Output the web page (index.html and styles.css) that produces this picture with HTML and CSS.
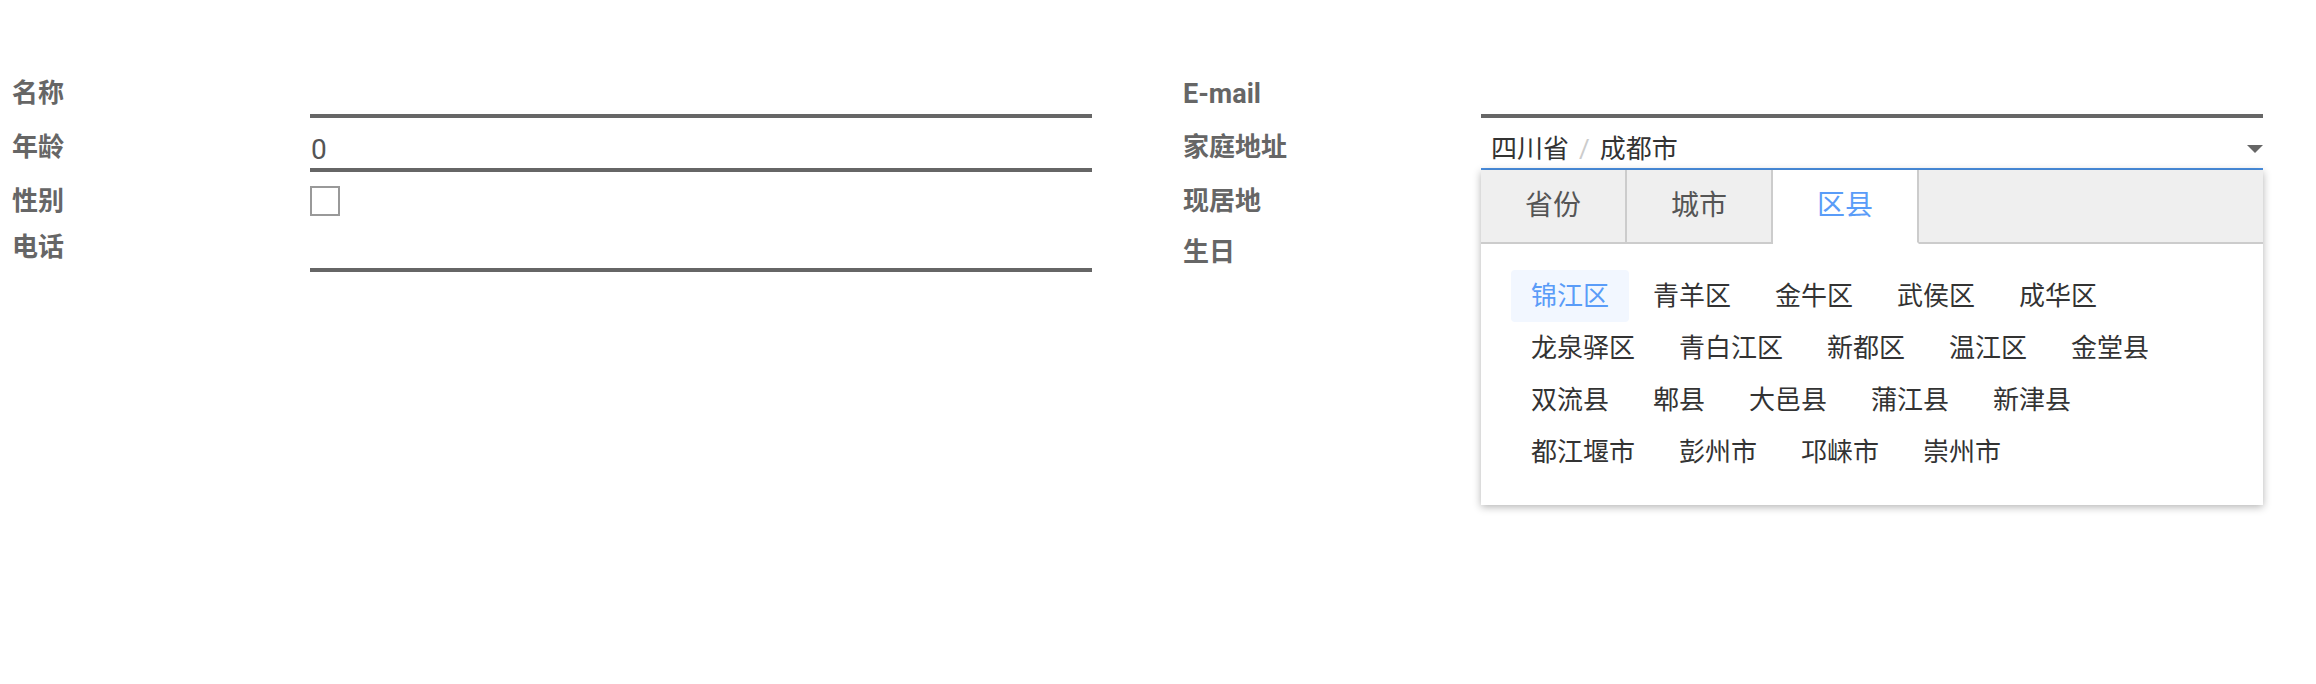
FILE: index.html
```html
<!DOCTYPE html>
<html lang="zh-CN">
<head>
<meta charset="utf-8">
<title>表单</title>
<link rel="stylesheet" href="styles.css">
</head>
<body>
<div class="form">
  <div class="group group-left">
    <div class="label">名称</div>
    <div class="field"><input class="input" type="text" value=""></div>
    <div class="label">年龄</div>
    <div class="field"><input class="input" type="text" value="0"></div>
    <div class="label">性别</div>
    <div class="field"><input class="checkbox" type="checkbox"></div>
    <div class="label">电话</div>
    <div class="field"><input class="input" type="text" value=""></div>
  </div>
  <div class="group group-right">
    <div class="label label-latin">E-mail</div>
    <div class="field"><input class="input" type="text" value=""></div>
    <div class="label">家庭地址</div>
    <div class="field">
      <div class="cascader">
        <span class="cas-value">四川省<span class="sep">/</span>成都市</span>
        <span class="caret"></span>
        <div class="cas-panel">
          <div class="tabs">
            <div class="tab">省份</div>
            <div class="tab">城市</div>
            <div class="tab tab-active">区县</div>
            <div class="tab-rest"></div>
          </div>
          <div class="options">
            <span class="opt opt-active">锦江区</span>
            <span class="opt">青羊区</span>
            <span class="opt">金牛区</span>
            <span class="opt">武侯区</span>
            <span class="opt">成华区</span>
            <span class="opt">龙泉驿区</span>
            <span class="opt">青白江区</span>
            <span class="opt">新都区</span>
            <span class="opt">温江区</span>
            <span class="opt">金堂县</span>
            <span class="opt">双流县</span>
            <span class="opt">郫县</span>
            <span class="opt">大邑县</span>
            <span class="opt">蒲江县</span>
            <span class="opt">新津县</span>
            <span class="opt">都江堰市</span>
            <span class="opt">彭州市</span>
            <span class="opt">邛崃市</span>
            <span class="opt">崇州市</span>
          </div>
        </div>
      </div>
    </div>
    <div class="label">现居地</div>
    <div class="field"></div>
    <div class="label">生日</div>
    <div class="field"></div>
  </div>
</div>
</body>
</html>
```

FILE: styles.css
```css
* {
  box-sizing: border-box;
}

html, body {
  margin: 0;
  min-height: 684px;
  background: #fff;
}

body {
  font-family: Roboto, "Noto Sans CJK SC", sans-serif;
  font-size: 26px;
  color: #333;
}

.form {
  display: flex;
  gap: 91px;
  min-height: 684px;
  padding: 76px 0 0 12px;
}

.group {
  width: 1080px;
  display: grid;
  grid-template-columns: 298px 782px;
  grid-template-rows: 54px 54px 46px 42px;
  align-items: start;
  align-content: start;
}

.group-right {
  grid-template-rows: 54px 54px 51px 42px;
}

.label {
  font-weight: 700;
  color: #666;
  line-height: 38px;
  margin-top: -2px;
}

.label-latin {
  font-size: 27px;
  margin-top: -1px;
}

.input {
  display: block;
  width: 100%;
  height: 42px;
  margin: 0;
  border: 0;
  border-bottom: 4px solid #666;
  border-radius: 0;
  padding: 0 1px;
  font-family: Roboto, "Noto Sans CJK SC", sans-serif;
  font-size: 28px;
  color: #555;
  background: transparent;
  outline: none;
}

.checkbox {
  -webkit-appearance: none;
  appearance: none;
  display: block;
  width: 30px;
  height: 30px;
  margin: 2px 0 0;
  border: 2px solid #999;
  border-radius: 0;
  background: #fff;
}

.cascader {
  position: relative;
  height: 40px;
  display: flex;
  align-items: center;
  padding: 0 0 0 10px;
  border-bottom: 2px solid #4a90e2;
  line-height: 38px;
  color: #333;
}

.sep {
  color: #ccc;
  margin: 0 10px;
}

.caret {
  margin-left: auto;
  width: 0;
  height: 0;
  border-left: 8px solid transparent;
  border-right: 8px solid transparent;
  border-top: 8px solid #666;
}

.cas-panel {
  position: absolute;
  z-index: 10;
  top: calc(100% + 2px);
  left: 0;
  right: 0;
  background: #fff;
  box-shadow: 0 2px 8px rgba(0, 0, 0, 0.3);
}

.tabs {
  display: flex;
  height: 74px;
  background: #efefef;
}

.tab {
  width: 146px;
  border-right: 2px solid #ccc;
  border-bottom: 2px solid #ccc;
  text-align: center;
  line-height: 72px;
  font-size: 28px;
  color: #555;
}

.tab-active {
  background: #fff;
  color: #5a9cf8;
  border-bottom-color: transparent;
}

.tab-rest {
  flex: 1;
  border-bottom: 2px solid #ccc;
}

.options {
  display: flex;
  flex-wrap: wrap;
  gap: 0 4px;
  padding: 26px 30px 27px;
}

.opt {
  height: 52px;
  line-height: 52px;
  padding: 0 20px;
  border-radius: 4px;
  color: #333;
  white-space: nowrap;
}

.opt-active {
  background: #f2f7ff;
  color: #5a9cf8;
}
```
